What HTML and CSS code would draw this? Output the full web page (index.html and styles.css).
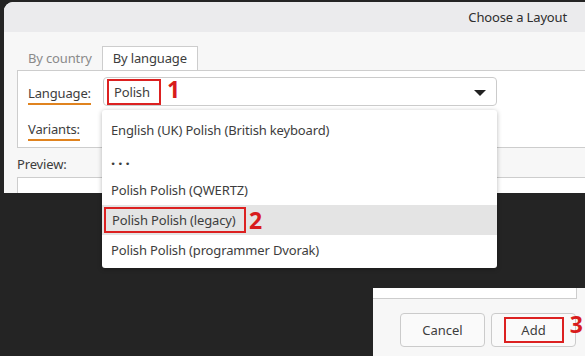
FILE: index.html
```html
<!DOCTYPE html>
<html lang="en">
<head>
  <meta charset="UTF-8" />
  <title>Choose a Layout</title>
  <link rel="stylesheet" href="styles.css">
</head>
<body>
  <div class="dialog">
    <div class="titlebar">Choose a Layout</div>
    <div class="content">
      <div class="tabs">
        <div class="tab">By country</div>
        <div class="tab active">By language</div>
      </div>
      <div class="panel">
        <div class="row">
          <span class="label"><u>Language:</u></span>
          <div class="combo">
            <span class="marked">Polish</span>
            <span class="note note-1">1</span>
            <span class="arrow"></span>
          </div>
        </div>
        <div class="row">
          <span class="label"><u>Variants:</u></span>
          <div class="combo"></div>
        </div>
      </div>
      <div class="preview-label">Preview:</div>
      <div class="preview"></div>
    </div>
  </div>

  <!-- dropdown list opened from the Variants combo -->
  <div class="popup">
    <div class="item">English (UK) Polish (British keyboard)</div>
    <div class="item dots">...</div>
    <div class="item">Polish Polish (QWERTZ)</div>
    <div class="item selected">
      <span class="marked">Polish Polish (legacy)</span>
      <span class="note note-2">2</span>
    </div>
    <div class="item">Polish Polish (programmer Dvorak)</div>
  </div>

  <!-- bottom of the same dialog -->
  <div class="footer">
    <div class="preview-end"></div>
    <div class="buttons">
      <button class="btn">Cancel</button>
      <button class="btn">
        <span class="marked">Add</span>
        <span class="note note-3">3</span>
      </button>
    </div>
  </div>
</body>
</html>
```

FILE: styles.css
```css
/* Global */
body {
  margin: 0;
  background: #242424;
  font-family: "Noto Sans", "Open Sans", sans-serif;
  font-size: 13px;
  letter-spacing: -0.15px;
  color: #3d3d3d;
  width: 585px;
  height: 356px;
  overflow: hidden;
  position: relative;
}

/* Top part of the dialog */
.dialog {
  margin: 2px 0 0 4px;
  height: 191px;
  background: #f7f7f7;
  border-top-left-radius: 9px;
  overflow: hidden;
}
.titlebar {
  height: 30px;
  line-height: 30px;
  background: #ebebed;
  text-align: right;
  padding-right: 18px;
  color: #2e2e2e;
}
.content {
  padding: 14px 0 0 13px;
}

/* Tabs */
.tabs {
  display: flex;
  height: 24px;
}
.tab {
  padding: 0 10px 0 11px;
  line-height: 24px;
  color: #8a8a8a;
}
.tab.active {
  background: #fff;
  color: #3d3d3d;
  border: 1px solid #cdcdcd;
  border-bottom: none;
  width: 96px;
  box-sizing: border-box;
  padding: 0;
  text-align: center;
  line-height: 23px;
}
.panel {
  background: #fff;
  border: 1px solid #cdcdcd;
  border-right: none;
  height: 78px;
  padding: 6px 0 0 10px;
  box-sizing: border-box;
}
.row {
  display: flex;
  align-items: center;
  height: 29px;
  margin-bottom: 7px;
}
.label {
  width: 75px;
  flex: none;
}
.label u {
  text-decoration: none;
  display: inline-block;
  border-bottom: 2px solid #e0831f;
  line-height: 16px;
  padding-bottom: 2px;
  margin-top: 6px;
}
.combo {
  width: 394px;
  height: 29px;
  box-sizing: border-box;
  border: 1px solid #cbcbcb;
  border-radius: 4px;
  background: #fff;
  display: flex;
  align-items: center;
  padding-left: 3px;
  position: relative;
}
.arrow {
  position: absolute;
  right: 10px;
  top: 12px;
  border-left: 6px solid transparent;
  border-right: 6px solid transparent;
  border-top: 6px solid #222;
}

/* red annotation boxes and numbers */
.marked {
  display: inline-block;
  border: 2px solid #dc2121;
  padding: 0 9px 0 5px;
  line-height: 22px;
}
.note {
  position: absolute;
  color: #d81c1c;
  font-weight: bold;
  font-size: 23px;
  line-height: 20px;
  letter-spacing: 0;
}
.note-1 { left: 63px; top: 1px; }
.note-2 { left: 147px; top: 5px; }
.note-3 { right: -8px; top: 0; }

.preview-label {
  padding: 8px 0 0 0;
  line-height: 16px;
  height: 21px;
}
.preview {
  background: #fff;
  border: 1px solid #cdcdcd;
  border-right: none;
  height: 30px;
}

/* Popup list */
.popup {
  position: absolute;
  left: 102px;
  top: 110px;
  width: 395px;
  height: 158px;
  background: #fff;
  border-radius: 3px;
  box-shadow: 0 1px 5px rgba(0, 0, 0, 0.28);
  overflow: hidden;
  padding-top: 5px;
  box-sizing: border-box;
}
.item {
  height: 30px;
  line-height: 30px;
  padding-left: 9px;
  white-space: nowrap;
  position: relative;
}
.item.dots {
  font-weight: bold;
  letter-spacing: 3px;
  line-height: 28px;
  font-size: 15px;
}
.item.selected {
  background: #e4e4e4;
  padding-left: 2px;
  display: flex;
  align-items: center;
}
.item.selected .marked {
  padding: 0 8px 0 6px;
}

/* Bottom right part of the dialog */
.footer {
  position: absolute;
  left: 373px;
  top: 288px;
  right: 0;
  bottom: 0;
  background: #f7f7f7;
}
.preview-end {
  width: 204px;
  height: 11px;
  box-sizing: border-box;
  background: #fff;
  border-right: 1px solid #cdcdcd;
  border-bottom: 1px solid #cdcdcd;
}
.buttons {
  display: flex;
  justify-content: flex-end;
  gap: 6px;
  padding: 14px 9px 0 0;
}
.btn {
  width: 85px;
  height: 34px;
  border: 1px solid #cbcbcb;
  border-radius: 4px;
  background: #fafafa;
  font: inherit;
  color: #3d3d3d;
  position: relative;
  padding: 0;
}
.btn .marked {
  padding: 0 10px;
  width: 60px;
  box-sizing: border-box;
}
```
